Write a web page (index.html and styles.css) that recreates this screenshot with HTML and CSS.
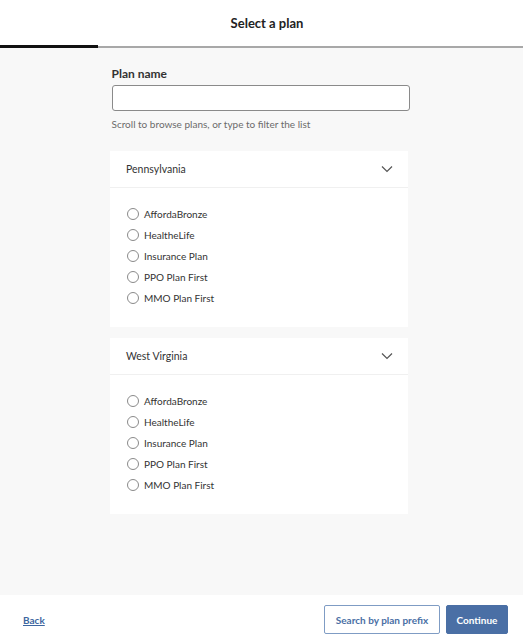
FILE: index.html
```html
<!DOCTYPE html>
<html lang="en">
<head>
<meta charset="utf-8">
<title>Select a plan</title>
<link rel="stylesheet" href="styles.css">
</head>
<body>
<div class="app">
  <header class="topbar"><h1 class="title">Select a plan</h1></header>
  <div class="progress"><div class="progress-fill"></div></div>
  <main class="main">
    <div class="column">
      <label class="field-label" for="plan">Plan name</label>
      <input class="field-input" id="plan" type="text">
      <p class="hint">Scroll to browse plans, or type to filter the list</p>

      <section class="card">
        <div class="card-head">
          <span>Pennsylvania</span>
          <svg class="chev" width="12" height="8" viewBox="0 0 12 8"><path d="M1 1.5l5 5 5-5" fill="none" stroke="#555" stroke-width="1.2"/></svg>
        </div>
        <ul class="options">
          <li class="option"><span class="radio"></span>AffordaBronze</li>
          <li class="option"><span class="radio"></span>HealtheLife</li>
          <li class="option"><span class="radio"></span>Insurance Plan</li>
          <li class="option"><span class="radio"></span>PPO Plan First</li>
          <li class="option"><span class="radio"></span>MMO Plan First</li>
        </ul>
      </section>

      <section class="card">
        <div class="card-head">
          <span>West Virginia</span>
          <svg class="chev" width="12" height="8" viewBox="0 0 12 8"><path d="M1 1.5l5 5 5-5" fill="none" stroke="#555" stroke-width="1.2"/></svg>
        </div>
        <ul class="options">
          <li class="option"><span class="radio"></span>AffordaBronze</li>
          <li class="option"><span class="radio"></span>HealtheLife</li>
          <li class="option"><span class="radio"></span>Insurance Plan</li>
          <li class="option"><span class="radio"></span>PPO Plan First</li>
          <li class="option"><span class="radio"></span>MMO Plan First</li>
        </ul>
      </section>
    </div>
  </main>
  <footer class="footer">
    <a class="back" href="#">Back</a>
    <div class="actions">
      <button class="btn btn-outline" type="button">Search by plan prefix</button>
      <button class="btn btn-primary" type="button">Continue</button>
    </div>
  </footer>
</div>
</body>
</html>
```

FILE: styles.css
```css
* { box-sizing: border-box; }
html, body { margin: 0; padding: 0; }
body {
  font-family: Lato, "Liberation Sans", sans-serif;
  color: #333;
  background: #fff;
}
.app {
  height: 644px;
  display: flex;
  flex-direction: column;
}
.topbar {
  height: 45px;
  display: flex;
  align-items: center;
  justify-content: center;
  padding-left: 11px;
  background: #fff;
}
.title {
  margin: 0;
  font-size: 13px;
  font-weight: 700;
  color: #222;
}
.progress {
  height: 3px;
  background: #fff;
  display: flex;
  align-items: flex-end;
}
.progress::after {
  content: "";
  flex: 1;
  height: 2px;
  background: #a8a8a8;
}
.progress-fill {
  width: 98px;
  height: 3px;
  background: #111;
}
.main {
  flex: 1;
  background: #f8f8f8;
  padding: 18px 2px 0 0;
}
.column {
  width: 298px;
  margin: 0 auto;
  display: flex;
  flex-direction: column;
  align-items: flex-start;
}
.field-label {
  font-size: 12px;
  font-weight: 700;
  color: #333;
  line-height: 16px;
}
.field-input {
  margin-top: 3px;
  height: 26px;
  border: 1px solid #8a8a8a;
  border-radius: 3px;
  background: #fff;
  width: 298px;
}
.hint {
  margin: 6px 0 0;
  font-size: 10px;
  line-height: 14px;
  color: #6b6b6b;
}
.card {
  background: #fff;
  width: 298px;
  margin-left: -1.5px;
  margin-top: 20px;
}
.card + .card { margin-top: 11px; }
.card-head {
  height: 37px;
  border-bottom: 1px solid #f0f0f0;
  display: flex;
  align-items: center;
  justify-content: space-between;
  padding: 0 15px 0 16px;
  font-size: 10.5px;
  color: #333;
}
.options {
  list-style: none;
  margin: 0;
  padding: 15px 0 19px 17px;
}
.option {
  height: 21px;
  display: flex;
  align-items: center;
  font-size: 10px;
  color: #333;
}
.radio {
  width: 12px;
  height: 12px;
  border: 1px solid #8a8a8a;
  border-radius: 50%;
  margin-right: 5px;
  background: #fff;
}
.footer {
  height: 49px;
  background: #fff;
  display: flex;
  align-items: center;
  justify-content: space-between;
  padding: 0 15px 0 23px;
}
.back {
  color: #3d66a0;
  font-size: 10px;
  font-weight: 700;
  text-decoration: underline;
}
.actions {
  display: flex;
  gap: 6px;
}
.btn {
  height: 29px;
  font-family: inherit;
  font-size: 10px;
  font-weight: 700;
  border-radius: 2px;
  padding: 0;
  white-space: nowrap;
  cursor: pointer;
}
.btn-outline {
  background: #fff;
  color: #4a6fa5;
  border: 1px solid #7f9cc4;
  width: 116px;
}
.btn-primary {
  background: #4a6fa5;
  color: #fff;
  border: 1px solid #4a6fa5;
  width: 62px;
}
```
